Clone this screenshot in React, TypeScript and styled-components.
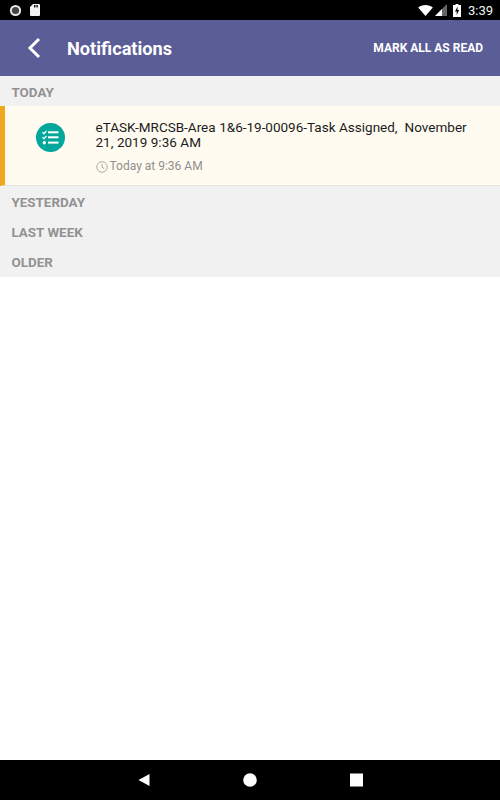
import React from "react";
import styled, { createGlobalStyle } from "styled-components";

const GlobalStyle = createGlobalStyle`
  html, body {
    margin: 0;
    padding: 0;
    background: #fff;
    font-family: Roboto, "Liberation Sans", sans-serif;
  }
`;

const Screen = styled.div`
  width: 500px;
  height: 800px;
  display: flex;
  flex-direction: column;
  overflow: hidden;
`;

const StatusBar = styled.div`
  height: 20px;
  flex: none;
  background: #000;
  display: flex;
  align-items: center;
  justify-content: space-between;
  padding: 0 7px 0 9px;
`;

const StatusGroup = styled.div`
  display: flex;
  align-items: center;
`;

const Clock = styled.span`
  color: #f2f2f2;
  font-size: 13px;
  font-weight: 400;
  margin-left: 7px;
`;

const AppBar = styled.header`
  height: 56px;
  flex: none;
  box-sizing: border-box;
  background: #5a5d96;
  display: flex;
  align-items: center;
  padding: 0 17px 0 27px;
`;

const BackButton = styled.svg`
  width: 14px;
  height: 22px;
  flex: none;
`;

const Title = styled.h1`
  margin: 0 0 0 26px;
  flex: 1;
  color: #fff;
  font-size: 18.2px;
  font-weight: 700;
`;

const MarkAll = styled.span`
  color: #fff;
  font-size: 12px;
  font-weight: 700;
`;

const Content = styled.main`
  flex: 1;
  background: #fff;
`;

const SectionHeader = styled.div`
  height: 30px;
  box-sizing: border-box;
  background: #f1f1f1;
  color: #929292;
  font-size: 13.4px;
  font-weight: 700;
  line-height: 30px;
  padding: 2px 0 0 11.5px;
`;

const SectionGroup = styled.div`
  background: #f1f1f1;
  padding-bottom: 1px;
`;

const NotificationRow = styled.div`
  height: 80px;
  box-sizing: border-box;
  display: flex;
  background: #fffbf0;
  border-left: 5.5px solid #f0a91e;
  border-bottom: 1px solid #e6e4dc;
`;

const IconCell = styled.div`
  width: 90.5px;
  flex: none;
  display: flex;
  justify-content: center;
  padding-top: 17px;
  box-sizing: border-box;
`;

const Badge = styled.div`
  width: 29px;
  height: 29px;
  border-radius: 50%;
  background: #00a79a;
  display: flex;
  align-items: center;
  justify-content: center;
`;

const Body = styled.div`
  flex: 1;
  padding: 14px 20px 0 0;
`;

const Message = styled.div`
  color: #1c1c1c;
  font-size: 13.5px;
  line-height: 15px;
  word-spacing: 0.2px;
`;

const Timestamp = styled.div`
  display: flex;
  align-items: center;
  gap: 1.5px;
  margin-top: 9px;
  padding-left: 0.5px;
  color: #8f8f8f;
  font-size: 12px;
  line-height: 15px;
`;

const NavBar = styled.nav`
  height: 40px;
  flex: none;
  background: #000;
  display: flex;
  align-items: center;
  justify-content: center;
  gap: 92px;
`;

const NavIcon = styled.svg`
  width: 14px;
  height: 14px;
  display: block;
`;

const App = () => {
  return (
    <Screen>
      <GlobalStyle />
      <StatusBar>
        <StatusGroup>
          <svg width="13" height="13" viewBox="0 0 13 13" style={{ marginRight: 8 }}>
            <circle cx="6.5" cy="6.5" r="5.6" fill="#e8e8e8" />
            <circle cx="6.5" cy="6.5" r="3.6" fill="#444" />
          </svg>
          <svg width="10" height="12" viewBox="0 0 10 12">
            <path d="M3 0h6a1 1 0 0 1 1 1v10a1 1 0 0 1-1 1H1a1 1 0 0 1-1-1V3z" fill="#f2f2f2" />
            <rect x="4" y="1" width="1.4" height="2.4" fill="#000" />
            <rect x="6.4" y="1" width="1.4" height="2.4" fill="#000" />
          </svg>
        </StatusGroup>
        <StatusGroup>
          <svg width="15" height="11" viewBox="0 0 16 12">
            <path d="M0 2.6C2 1 4.8 0 8 0s6 1 8 2.6L8 12z" fill="#fff" />
          </svg>
          <svg width="12" height="12" viewBox="0 0 12 12" style={{ marginLeft: 2 }}>
            <path d="M12 0v12H0z" fill="#666" />
            <path d="M7 5v7H0z" fill="#fff" />
          </svg>
          <svg width="8" height="13" viewBox="0 0 8 13" style={{ marginLeft: 6 }}>
            <path d="M2.5 0h3v1H8v12H0V1h2.500z" fill="#fff" />
            <path d="M4.600 2.500 2 7.500h1.700V11l2.500-5H4.500z" fill="#000" />
          </svg>
          <Clock>3:39</Clock>
        </StatusGroup>
      </StatusBar>
      <AppBar>
        <BackButton viewBox="0 0 14 22">
          <path d="M12 2 3 11l9 9" fill="none" stroke="#fff" strokeWidth="3" />
        </BackButton>
        <Title>Notifications</Title>
        <MarkAll>MARK ALL AS READ</MarkAll>
      </AppBar>
      <Content>
        <SectionHeader>TODAY</SectionHeader>
        <NotificationRow>
          <IconCell>
            <Badge>
              <svg width="17" height="15" viewBox="0 0 17 15">
                <path d="M0.500 2.200 2 3.700 4.500 0.800M0.500 7.200 2 8.700 4.500 5.800" fill="none" stroke="#fff" strokeWidth="1.300" />
                <circle cx="2.300" cy="12.700" r="1.700" fill="#fff" />
                <rect x="6" y="1.300" width="10.500" height="2" fill="#fff" />
                <rect x="6" y="6.300" width="10.500" height="2" fill="#fff" />
                <rect x="6" y="11.600" width="10.500" height="2" fill="#fff" />
              </svg>
            </Badge>
          </IconCell>
          <Body>
            <Message>
              eTASK-MRCSB-Area 1&amp;6-19-00096-Task Assigned,&nbsp; November 21, 2019 9:36 AM
            </Message>
            <Timestamp>
              <svg width="12" height="12" viewBox="0 0 13 13" style={{ flex: "none" }}>
                <circle cx="6.500" cy="6.500" r="5.700" fill="none" stroke="#a5a5a5" strokeWidth="1" />
                <path d="M6.500 3v3.800l2.600 1.500" fill="none" stroke="#a5a5a5" strokeWidth="1" />
              </svg>
              Today at 9:36 AM
            </Timestamp>
          </Body>
        </NotificationRow>
        <SectionGroup>
          <SectionHeader>YESTERDAY</SectionHeader>
          <SectionHeader>LAST WEEK</SectionHeader>
          <SectionHeader>OLDER</SectionHeader>
        </SectionGroup>
      </Content>
      <NavBar>
        <NavIcon viewBox="0 0 14 14">
          <path d="M12.500 1v12L1.500 7z" fill="#fff" />
        </NavIcon>
        <NavIcon viewBox="0 0 14 14">
          <circle cx="7" cy="7" r="6.800" fill="#fff" />
        </NavIcon>
        <NavIcon viewBox="0 0 14 14">
          <rect x="1" y="0.500" width="13" height="13" fill="#fff" />
        </NavIcon>
      </NavBar>
    </Screen>
  );
};

export default App;
